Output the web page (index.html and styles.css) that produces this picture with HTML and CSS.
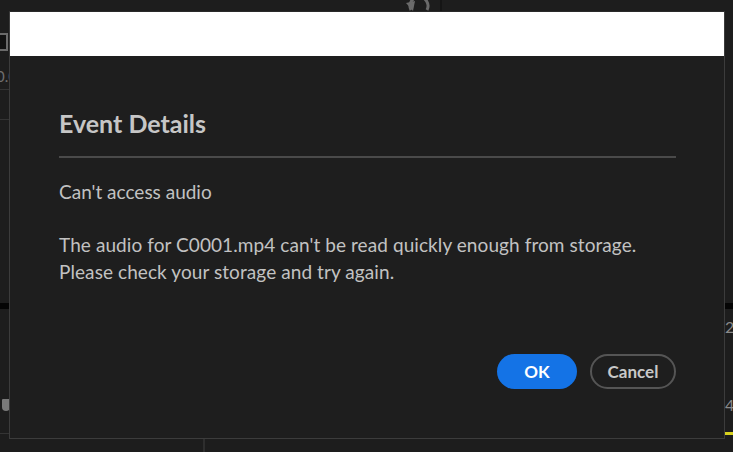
FILE: index.html
```html
<!DOCTYPE html>
<html lang="en">
<head>
<meta charset="utf-8">
<title>Event Details</title>
<link rel="stylesheet" href="styles.css">
</head>
<body>
<div class="app">
  <div class="topbar">
    <div class="topbar-left"></div>
    <svg class="undo" width="26" height="14" viewBox="0 0 26 14"><path d="M6 12 A9 9 0 1 1 22 12" fill="none" stroke="#6a6a6a" stroke-width="3"/><path d="M1 5 L8 13 L10 3 Z" fill="#6a6a6a"/></svg>
    <div class="topbar-right"></div>
  </div>
  <div class="workspace">
    <div class="side left">
      <div class="chk"></div>
      <div class="num">0.0</div>
      <div class="rule r1"></div>
      <div class="rule r2"></div>
      <div class="blackbar"></div>
      <div class="shield"></div>
      <div class="rule r3"></div>
    </div>
    <div class="center"></div>
    <div class="side right">
      <div class="blackbar"></div>
      <div class="rnum n2">2</div>
      <div class="rnum n4">4</div>
      <div class="yellow"></div>
    </div>
  </div>
  <div class="bottombar"><div class="bottom-split"></div></div>
</div>

<div class="dialog">
  <div class="dialog-head"></div>
  <div class="dialog-body">
    <h1 class="title">Event Details</h1>
    <div class="divider"></div>
    <p class="subject">Can't access audio</p>
    <p class="message">The audio for C0001.mp4 can't be read quickly enough from storage.<br>Please check your storage and try again.</p>
    <div class="actions">
      <button class="btn btn-primary">OK</button>
      <button class="btn btn-secondary">Cancel</button>
    </div>
  </div>
</div>
</body>
</html>
```

FILE: styles.css
```css
* { box-sizing: border-box; }
html, body {
  margin: 0;
  padding: 0;
  width: 733px;
  height: 452px;
  overflow: hidden;
  background: #1d1d1d;
  font-family: Lato, "Liberation Sans", sans-serif;
}

.app {
  width: 733px;
  height: 452px;
  display: flex;
  flex-direction: column;
}
.topbar {
  height: 12px;
  display: flex;
  align-items: flex-start;
}
.topbar-left { flex: 0 0 405px; }
.undo { flex: 0 0 26px; margin-top: -2px; }
.topbar-right {
  flex: 1;
  margin-left: 9px;
  height: 12px;
  border-left: 2px solid #151515;
}
.workspace {
  flex: 1;
  display: flex;
}
.side {
  width: 10px;
  position: relative;
  overflow: hidden;
}
.side.right { width: 9px; }
.center { flex: 1; }
.chk {
  position: absolute;
  left: -4px; top: 21px;
  width: 12px; height: 18px;
  border: 2px solid #6a6a6a;
  background: #111;
}
.num {
  position: absolute;
  left: -4px; top: 55px;
  font-size: 15px;
  color: #6f6f6f;
}
.rule {
  position: absolute;
  left: 0; right: 0;
  height: 1px;
  background: #343434;
}
.r1 { top: 77px; }
.r2 { top: 107px; }
.r3 { top: 421px; }
.blackbar {
  position: absolute;
  left: 0; right: 0;
  top: 291px;
  height: 6px;
  background: #050505;
}
.shield {
  position: absolute;
  left: 2px; top: 387px;
  width: 8px; height: 12px;
  background: #7a7a7a;
  border-radius: 1px 0 4px 4px;
}
.rnum {
  position: absolute;
  left: 1px;
  font-size: 16px;
  color: #8a8a8a;
}
.n2 { top: 305px; }
.n4 { top: 383px; }
.yellow {
  position: absolute;
  left: 0; right: 0;
  top: 420px;
  height: 3px;
  background: #d8d21e;
}
.bottombar {
  height: 14px;
  display: flex;
}
.bottom-split {
  margin-left: 203px;
  width: 2px;
  height: 14px;
  background: #2e2e2e;
}

.dialog {
  position: absolute;
  left: 9px;
  top: 11px;
  width: 716px;
  height: 428px;
  background: #1e1e1e;
  border: 1px solid #3c3c3c;
  border-top-color: #2a2a2a;
  display: flex;
  flex-direction: column;
}
.dialog-head {
  height: 44px;
  background: #ffffff;
}
.dialog-body {
  flex: 1;
  display: flex;
  flex-direction: column;
  padding: 52px 48px 49px 49px;
}
.title {
  margin: 0;
  font-size: 25px;
  font-weight: 700;
  line-height: 30px;
  color: #c6c6c6;
}
.divider {
  height: 2px;
  background: #4a4a4a;
  margin-top: 18px;
}
.subject {
  margin: 22px 0 0;
  font-size: 19px;
  line-height: 24px;
  color: #c2c2c2;
}
.message {
  margin: 27px 0 0;
  font-size: 19px;
  line-height: 27px;
  letter-spacing: 0.08px;
  color: #c2c2c2;
}
.actions {
  margin-top: auto;
  display: flex;
  justify-content: flex-end;
  gap: 13px;
}
.btn {
  height: 35px;
  border-radius: 18px;
  font-family: Lato, "Liberation Sans", sans-serif;
  font-size: 17px;
  font-weight: 700;
  padding: 0;
  cursor: pointer;
}
.btn-primary {
  width: 80px;
  background: #1473e6;
  border: none;
  color: #ffffff;
}
.btn-secondary {
  width: 86px;
  background: transparent;
  border: 2px solid #555555;
  color: #c8c8c8;
}
```
